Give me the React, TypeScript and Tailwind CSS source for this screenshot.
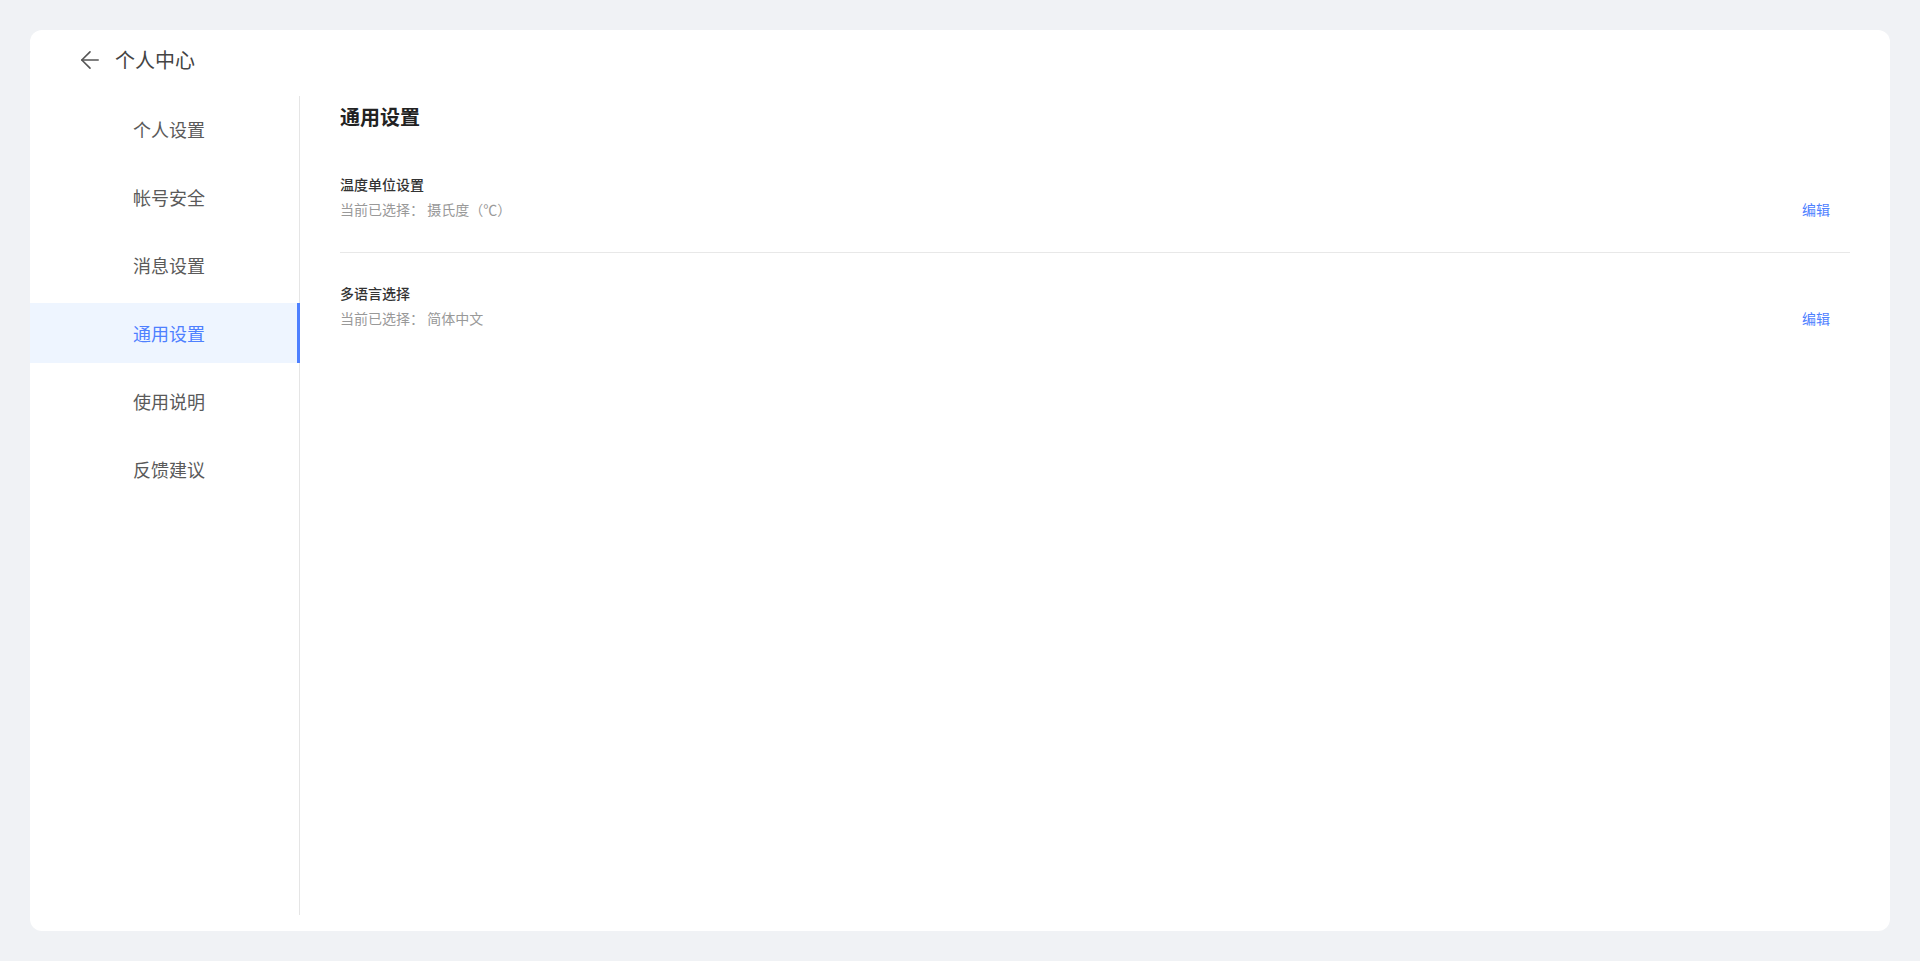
import { useState } from "react";
import { ArrowLeft } from "lucide-react";

const menus: string[] = ["个人设置", "帐号安全", "消息设置", "通用设置", "使用说明", "反馈建议"];

const settings = [
  { label: "温度单位设置", value: "当前已选择： 摄氏度（℃）" },
  { label: "多语言选择", value: "当前已选择： 简体中文" },
];

const App: React.FC = () => {
  const [active, setActive] = useState("通用设置");

  return (
    <div
      className="h-screen bg-[#f0f2f5] p-[30px]"
      style={{ fontFamily: '"Noto Sans CJK SC", "Noto Sans", sans-serif' }}
    >
      <div className="flex h-full flex-col rounded-[12px] bg-white">
        <header className="flex h-[60px] items-center pl-[46px]">
          <button className="flex items-center text-[#555]">
            <ArrowLeft size={28} strokeWidth={1.4} />
          </button>
          <h1 className="ml-[11px] text-[20px] leading-[30px] text-[#444]">个人中心</h1>
        </header>

        <div className="mt-[6px] flex flex-1 pb-[16px]">
          <aside className="w-[270px] shrink-0 border-r border-[#e5e5e5] pt-[3px]">
            <ul>
              {menus.map((m) => (
                <li
                  key={m}
                  onClick={() => setActive(m)}
                  className={
                    m === active
                      ? "mb-[8px] flex h-[60px] cursor-pointer items-center border-r-[3px] border-[#4e80ff] bg-[#eef5ff] pl-[103px] text-[18px] text-[#4e80ff]"
                      : "mb-[8px] flex h-[60px] cursor-pointer items-center pl-[103px] text-[18px] text-[#5a5a5a]"
                  }
                  style={m === active ? { marginRight: "-1px" } : undefined}
                >
                  {m}
                </li>
              ))}
            </ul>
          </aside>

          <section className="flex-1 px-[40px] pt-[7px]">
            <h2 className="text-[20px] font-bold leading-[28px] text-[#222]">通用设置</h2>
            <div className="mt-[13px]">
              {settings.map((s, i) => (
                <div
                  key={s.label}
                  className={
                    i === 0
                      ? "flex items-center justify-between border-b border-[#e8e8e8] pt-[30px] pb-[33px]"
                      : "flex items-center justify-between pt-[30px] pb-[31px]"
                  }
                >
                  <div>
                    <div className="text-[14px] font-medium leading-[20px] text-[#333]">{s.label}</div>
                    <div className="mt-[5px] text-[14px] leading-[20px] text-[#999]">{s.value}</div>
                  </div>
                  <button className="mt-[25px] mr-[20px] text-[14px] leading-[20px] text-[#4e80ff]">编辑</button>
                </div>
              ))}
            </div>
          </section>
        </div>
      </div>
    </div>
  );
};

export default App;
